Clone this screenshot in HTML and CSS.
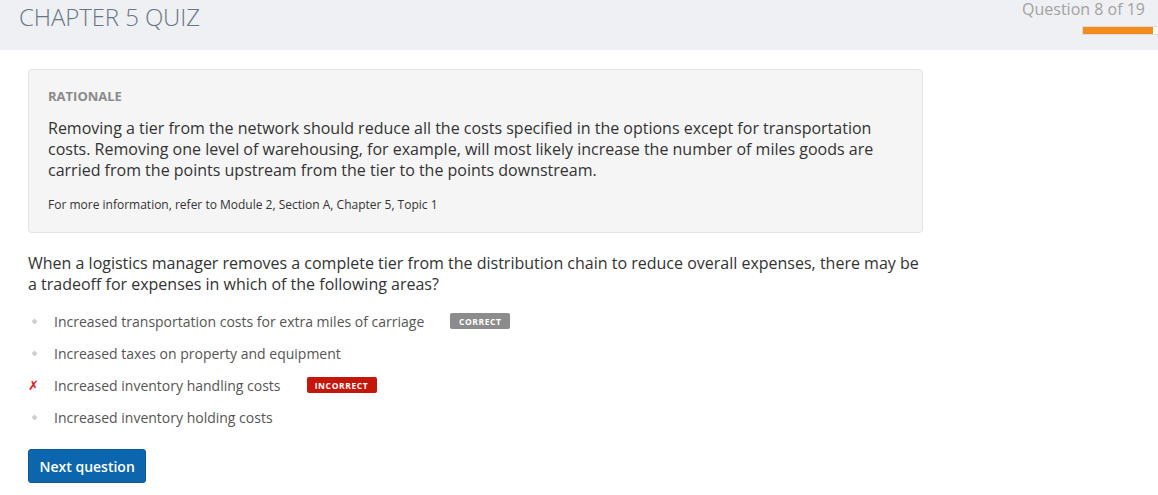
FILE: index.html
```html
<!DOCTYPE html>
<html>
<head>
<meta charset="utf-8">
<link rel="stylesheet" href="styles.css">
</head>
<body>
<header class="header">
  <h1 class="title">CHAPTER 5 QUIZ</h1>
  <div class="status">
    <div class="count">Question 8 of 19</div>
    <div class="progress"><div class="progress-fill"></div></div>
  </div>
</header>
<main class="content">
  <section class="rationale">
    <h2 class="rationale-head">RATIONALE</h2>
    <p class="rationale-text">Removing a tier from the network should reduce all the costs specified in the options except for transportation costs. Removing one level of warehousing, for example, will most likely increase the number of miles goods are carried from the points upstream from the tier to the points downstream.</p>
    <p class="rationale-ref">For more information, refer to Module 2, Section A, Chapter 5, Topic 1</p>
  </section>
  <p class="question">When a logistics manager removes a complete tier from the distribution chain to reduce overall expenses, there may be a tradeoff for expenses in which of the following areas?</p>
  <ul class="options">
    <li class="option"><span class="mark"><svg width="7" height="7" viewBox="0 0 7 7"><path d="M3.5 0.5 L6.5 3.5 L3.5 6.5 L0.5 3.5 Z" fill="#cfcfcf"/></svg></span><span class="opt-text">Increased transportation costs for extra miles of carriage</span><span class="label label-correct">CORRECT</span></li>
    <li class="option"><span class="mark"><svg width="7" height="7" viewBox="0 0 7 7"><path d="M3.5 0.5 L6.5 3.5 L3.5 6.5 L0.5 3.5 Z" fill="#cfcfcf"/></svg></span><span class="opt-text">Increased taxes on property and equipment</span></li>
    <li class="option"><span class="mark mark-x">✗</span><span class="opt-text">Increased inventory handling costs</span><span class="label label-incorrect">INCORRECT</span></li>
    <li class="option"><span class="mark"><svg width="7" height="7" viewBox="0 0 7 7"><path d="M3.5 0.5 L6.5 3.5 L3.5 6.5 L0.5 3.5 Z" fill="#cfcfcf"/></svg></span><span class="opt-text">Increased inventory holding costs</span></li>
  </ul>
  <button class="next">Next question</button>
</main>
</body>
</html>
```
FILE: styles.css
```css
* { box-sizing: border-box; }
body {
  margin: 0;
  font-family: "Open Sans", "Liberation Sans", sans-serif;
  background: #fff;
  color: #333;
}
.header {
  height: 50px;
  background: #eff0f4;
  display: flex;
  justify-content: space-between;
  align-items: flex-start;
}
.title {
  margin: 0;
  padding: 0 0 0 19px;
  font-size: 24px;
  font-weight: 300;
  color: #687684;
  line-height: 33px;
  letter-spacing: -0.1px;
}
.status {
  display: flex;
  flex-direction: column;
  align-items: flex-end;
}
.count {
  font-size: 16px;
  color: #a2a2a2;
  line-height: 20px;
  margin-right: 13px;
  margin-top: -1px;
}
.progress {
  margin-top: 7px;
  width: 76px;
  height: 9px;
  background: #fff;
  border: 1px solid #dcdde2;
  border-right: none;
  display: flex;
}
.progress-fill {
  width: 70px;
  background: #f38c1c;
}
.content {
  width: 895px;
  margin-left: 28px;
  padding-top: 19px;
}
.rationale {
  background: #f5f5f5;
  border: 1px solid #e3e3e3;
  border-radius: 4px;
  padding: 18px 19px 19px 19px;
}
.rationale-head {
  margin: 0;
  font-size: 13px;
  font-weight: 700;
  color: #8a8a8a;
  line-height: 17px;
}
.rationale-text {
  margin: 13px 0 0;
  font-size: 16px;
  line-height: 21px;
  color: #333;
}
.rationale-ref {
  margin: 16px 0 0;
  font-size: 12px;
  line-height: 16px;
  color: #333;
}
.question {
  margin: 20px 0 0;
  font-size: 16px;
  line-height: 21px;
  color: #333;
}
.options {
  list-style: none;
  margin: 10px 0 0;
  padding: 0;
}
.option {
  height: 32px;
  display: flex;
  align-items: center;
  font-size: 14px;
  color: #555;
}
.mark {
  width: 26px;
  display: flex;
  align-items: center;
  padding-left: 3px;
}
.mark-x {
  color: #e8141a;
  font-family: "DejaVu Sans", sans-serif;
  font-size: 13px;
  padding-left: 0;
  font-style: italic;
}
.label {
  margin-left: 26px;
  height: 16px;
  display: inline-flex;
  align-items: center;
  justify-content: center;
  font-size: 8.5px;
  font-weight: 700;
  letter-spacing: 0.6px;
  color: #fff;
  border-radius: 2px;
}
.label-correct {
  width: 60px;
  background: #8c8c8c;
}
.label-incorrect {
  width: 70px;
  background: #c4160a;
}
.next {
  margin-top: 16px;
  height: 34px;
  padding: 0 10.5px;
  background: #0b66ae;
  color: #fff;
  border: 1px solid #0a5a9a;
  border-radius: 3px;
  font-family: "Open Sans", "Liberation Sans", sans-serif;
  font-size: 14px;
  font-weight: 600;
}
```
